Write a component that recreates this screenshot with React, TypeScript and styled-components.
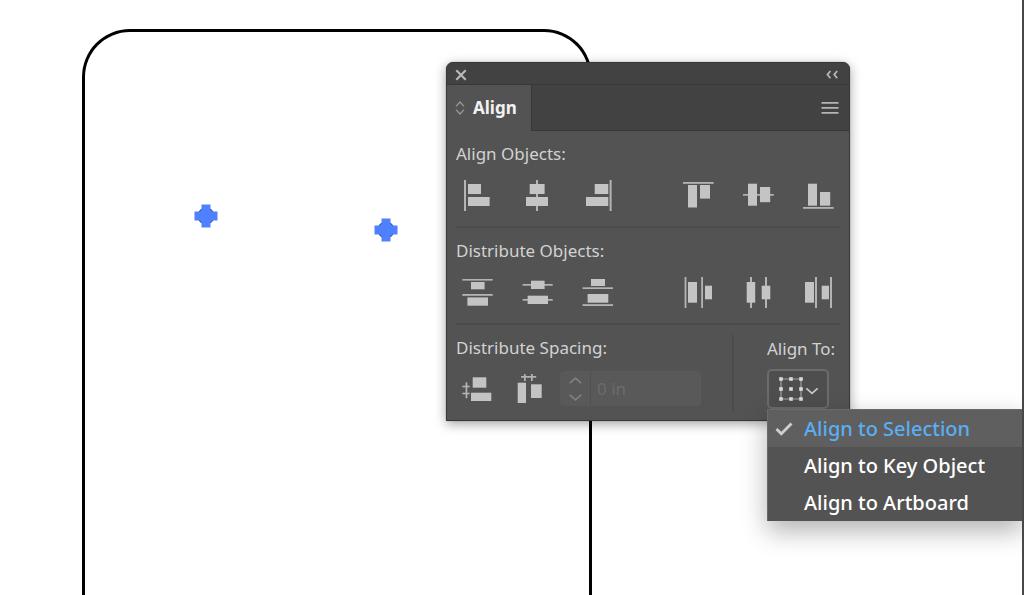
import React from "react";
import styled, { createGlobalStyle } from "styled-components";

const GlobalStyle = createGlobalStyle`
  * { box-sizing: border-box; }
  body { margin: 0; background: #fff; }
  button, input { font: inherit; color: inherit; }
`;

const Canvas = styled.main`
  position: relative;
  min-height: 100vh;
  overflow: hidden;
  background: #fff;
  border-right: 2px solid #48484a;
  font-family: "Noto Sans", "Open Sans", sans-serif;
  font-size: 17px;
  line-height: 24px;
  color: #d2d2d2;
`;

const Artboard = styled.div`
  position: absolute;
  left: 82px;
  top: 29px;
  bottom: 0;
  width: 510px;
  border: 3px solid #000;
  border-bottom: 0;
  border-radius: 48px 48px 0 0;
`;

const Anchor = styled.svg<{ $x: number; $y: number }>`
  position: absolute;
  left: ${(p) => p.$x}px;
  top: ${(p) => p.$y}px;
  width: 24px;
  height: 24px;
`;

const Panel = styled.section`
  position: absolute;
  left: 446px;
  top: 62px;
  width: 404px;
  background: #535353;
  border: 1px solid #383838;
  border-radius: 7px 7px 0 0;
  box-shadow: 0 3px 12px rgba(0, 0, 0, 0.36), 0 0 1px rgba(0, 0, 0, 0.6);
`;

const TitleBar = styled.header`
  display: flex;
  align-items: center;
  justify-content: space-between;
  height: 22px;
  padding: 2px 11px 0 8px;
  background: #424242;
  border-bottom: 1px solid #383838;
  border-radius: 6px 6px 0 0;
`;

const IconButton = styled.button`
  display: flex;
  padding: 0;
  border: 0;
  background: none;
  color: #b8b8b8;
`;

const TabBar = styled.div`
  display: flex;
  align-items: stretch;
  justify-content: space-between;
  height: 46px;
  padding-right: 10px;
  background: #424242;
  box-shadow: inset 0 -1px #383838;
`;

const Tab = styled.button`
  display: flex;
  align-items: center;
  gap: 8px;
  width: 85px;
  padding: 0 0 0 8px;
  border: 0;
  border-right: 1px solid #383838;
  background: #535353;
  color: #f2f2f2;
  font-weight: 700;
`;

const Body = styled.div`
  padding: 0 9px;
`;

const Group = styled.div`
  height: 97px;
  padding-top: 11px;
  border-bottom: 2px solid #4c4c4c;
`;

const Label = styled.h2`
  margin: 0;
  font-size: 17px;
  line-height: 24px;
  font-weight: 400;
`;

const Tools = styled.div`
  display: flex;
  align-items: center;
  justify-content: space-between;
  margin-top: 14px;
  padding: 0 6px 0 5px;
`;

const ToolSet = styled.div<{ $gap: number }>`
  display: flex;
  gap: ${(p) => p.$gap}px;
`;

const Tool = styled(IconButton)`
  color: #c4c4c4;
`;

const Footer = styled.div`
  display: flex;
  justify-content: space-between;
  height: 95px;
`;

const Spacing = styled.div`
  flex: 1;
  padding-top: 11px;
`;

const SpacingTools = styled.div`
  display: flex;
  align-items: center;
  margin-top: 11px;
  padding-left: 5px;
`;

const Field = styled.div`
  display: flex;
  width: 141px;
  height: 35px;
  margin-left: 15px;
  background: #595959;
  border-radius: 4px;
`;

const Stepper = styled.div`
  display: flex;
  flex-direction: column;
  align-items: center;
  justify-content: center;
  gap: 10px;
  width: 31px;
  border-right: 1px solid #505050;
`;

const Step = styled(IconButton)`
  color: #808080;
`;

const Amount = styled.input`
  flex: 1;
  min-width: 0;
  padding: 0 6px;
  border: 0;
  background: none;
  color: #6c6c6c;
`;

const Rule = styled.div`
  width: 2px;
  height: 78px;
  margin: 9px 33px 0 0;
  background: #4c4c4c;
`;

const AlignTo = styled.div`
  position: relative;
  width: 73px;
  height: 84px;
  padding-top: 12px;
  white-space: nowrap;
`;

const Picker = styled.button`
  display: flex;
  align-items: center;
  justify-content: center;
  gap: 2px;
  width: 62px;
  height: 40px;
  margin-top: 8px;
  padding: 0;
  border: 2px solid #6b6b6b;
  border-radius: 5px;
  background: #4e4e4e;
`;

const Menu = styled.ul`
  position: absolute;
  left: 0;
  top: 100%;
  width: 256px;
  margin: 0;
  padding: 0;
  list-style: none;
  border: 1px solid #6a6a6a;
  border-bottom: 0;
  background: #535353;
  box-shadow: 0 10px 24px rgba(0, 0, 0, 0.3);
`;

const Option = styled.button<{ $on?: boolean }>`
  display: flex;
  align-items: center;
  gap: 10px;
  width: 100%;
  height: 37px;
  padding: 1px 0 0 7px;
  border: 0;
  background: ${(p) => (p.$on ? "#5f5f5f" : "#535353")};
  color: ${(p) => (p.$on ? "#5aaef2" : "#fff")};
  font-size: 20px;
  font-weight: 500;
  line-height: 28px;
`;

const Mark = styled.span`
  display: flex;
  width: 19px;
  color: #cfcfcf;
`;

type Box = [number, number, number, number];

/* Bars are given as left, top, right, bottom in a 32-pixel square. */
const Glyph = ({ boxes, lines }: { boxes: Box[]; lines: Box[] }) => (
  <svg width="32" height="32" viewBox="0 0 32 32" fill="currentColor" aria-hidden="true">
    {lines.map(([l, t, r, b], i) => (
      <rect key={"l" + i} x={l} y={t} width={r - l} height={b - t} fill="#b4b4b4" />
    ))}
    {boxes.map(([l, t, r, b], i) => (
      <rect key={"b" + i} x={l} y={t} width={r - l} height={b - t} />
    ))}
  </svg>
);

type ToolSpec = { name: string; boxes: Box[]; lines: Box[] };

const alignX: ToolSpec[] = [
  { name: "Horizontal align left", lines: [[3, 0, 5, 31]], boxes: [[7, 4, 20, 14], [7, 17, 28.6, 26]] },
  { name: "Horizontal align center", lines: [[15, 0, 17, 31]], boxes: [[8.7, 4, 23.6, 14], [5, 17, 27, 26]] },
  { name: "Horizontal align right", lines: [[28.6, 0, 30.6, 31]], boxes: [[13.7, 4, 27.3, 14], [5, 17, 27.3, 26]] },
];
const alignY: ToolSpec[] = [
  { name: "Vertical align top", lines: [[1, 2, 31.7, 3.8]], boxes: [[6, 5, 15, 27.5], [18, 5, 28, 18.6]] },
  { name: "Vertical align center", lines: [[1, 14, 31.7, 15.7]], boxes: [[6, 3.7, 15, 25.7], [18, 7, 28.2, 22.2]] },
  { name: "Vertical align bottom", lines: [[1, 27, 31.7, 28.8]], boxes: [[6, 3.7, 15, 25.7], [18, 12, 28.2, 25.7]] },
];
const distY: ToolSpec[] = [
  { name: "Distribute top", lines: [[1.3, 2, 31.7, 3.6], [1.3, 17, 31.7, 18.8]], boxes: [[10, 5, 23.6, 12.3], [6.4, 20.4, 27, 28.7]] },
  { name: "Distribute vertical center", lines: [[1.6, 7, 31.7, 8.7], [1.6, 22, 31.7, 23.7]], boxes: [[10, 3.7, 23.6, 12], [6.6, 18.7, 27, 27]] },
  { name: "Distribute bottom", lines: [[1.6, 10.3, 32, 12], [1.6, 27.2, 32, 29]], boxes: [[10, 2, 24, 9], [6.6, 17, 27.3, 25.7]] },
];
const distX: ToolSpec[] = [
  { name: "Distribute left", lines: [[2.6, 0, 4.4, 31], [19.2, 0, 21, 31]], boxes: [[6, 5, 15, 25.7], [23, 8.7, 30, 22.3]] },
  { name: "Distribute horizontal center", lines: [[8, 0, 10, 31], [23, 0, 25, 31]], boxes: [[4.7, 5, 13.2, 25.7], [19.7, 8.7, 28.3, 22.3]] },
  { name: "Distribute right", lines: [[13, 0, 15, 31], [28, 0, 30, 31]], boxes: [[3, 5, 12, 25.7], [19.7, 8.7, 27, 22.3]] },
];
const spacing: ToolSpec[] = [
  {
    name: "Vertical distribute space",
    lines: [[4.6, 9.3, 6.3, 25.2], [1.3, 12.7, 8.7, 14.3], [1.3, 19.7, 8.7, 21.3]],
    boxes: [[11.7, 4.3, 25.3, 14.7], [10, 19.7, 30.3, 28]],
  },
  {
    name: "Horizontal distribute space",
    lines: [[8, 3, 23.2, 4.7], [11, 1, 12.7, 8], [18, 1, 19.7, 8]],
    boxes: [[4.7, 9.7, 13, 30], [18, 11.3, 28.7, 25]],
  },
];

const ToolGroup = ({ tools, gap = 28 }: { tools: ToolSpec[]; gap?: number }) => (
  <ToolSet $gap={gap}>
    {tools.map((t) => (
      <Tool key={t.name} type="button" aria-label={t.name}>
        <Glyph boxes={t.boxes} lines={t.lines} />
      </Tool>
    ))}
  </ToolSet>
);

const AnchorPoint = ({ x, y }: { x: number; y: number }) => (
  <Anchor $x={x} $y={y} viewBox="0 0 24 24" aria-hidden="true">
    <circle cx="12" cy="12" r="8.5" fill="#1c2438" />
    <path
      d="M7.5 0.5h9v5l2 2h5v9h-5l-2 2v5h-9v-5l-2-2h-5v-9h5l2-2z"
      fill="#4f80ff"
    />
  </Anchor>
);

const Chevron = ({ up }: { up?: boolean }) => (
  <svg width="13" height="7" viewBox="0 0 13 7" fill="none" stroke="currentColor" strokeWidth="1.7" aria-hidden="true">
    <path d={up ? "M0.8 6.2l5.7-5 5.7 5" : "M0.8 0.8l5.7 5 5.7-5"} />
  </svg>
);

const PickerIcon = () => (
  <svg width="41" height="28" viewBox="0 0 41 28" aria-hidden="true">
    <path d="M3 4h20v20H3z" fill="none" stroke="#a0a0a0" strokeWidth="1.2" />
    {[3, 13, 23].map((x) =>
      [4, 14, 24].map((y) => (
        <rect key={x + "-" + y} x={x - 1.8} y={y - 1.8} width="3.6" height="3.6" fill="#dcdcdc" />
      ))
    )}
    <path d="M28.4 13.4l5.6 5 5.6-5" fill="none" stroke="#c8c8c8" strokeWidth="1.7" />
  </svg>
);

export default function App() {
  return (
    <>
      <GlobalStyle />
      <Canvas>
        <Artboard />
        <AnchorPoint x={194} y={204} />
        <AnchorPoint x={374} y={218} />
        <Panel aria-label="Align">
          <TitleBar>
            <IconButton type="button" aria-label="Close">
              <svg width="12" height="12" viewBox="0 0 12 12" stroke="currentColor" strokeWidth="2.2" aria-hidden="true">
                <path d="M1.3 1.3l9.4 9.4M10.7 1.3L1.3 10.7" />
              </svg>
            </IconButton>
            <IconButton type="button" aria-label="Collapse">
              <svg width="12" height="10" viewBox="0 0 12 10" fill="none" stroke="currentColor" strokeWidth="1.7" aria-hidden="true">
                <path d="M4.4 1L1.4 4.6l3 3.6M11.2 1l-3 3.6 3 3.6" />
              </svg>
            </IconButton>
          </TitleBar>
          <TabBar>
            <Tab type="button">
              <svg width="10" height="14" viewBox="0 0 10 14" fill="none" stroke="#9a9a9a" strokeWidth="1.2" aria-hidden="true">
                <path d="M1 5.4L5 1l4 4.4M1 8.6L5 13l4-4.4" />
              </svg>
              Align
            </Tab>
            <IconButton type="button" aria-label="Panel menu">
              <svg width="18" height="46" viewBox="0 0 18 46" fill="#b4b4b4" aria-hidden="true">
                <path d="M0.5 17h17v1.8h-17zM0.5 22h17v1.8h-17zM0.5 27h17v1.8h-17z" />
              </svg>
            </IconButton>
          </TabBar>
          <Body>
            <Group>
              <Label>Align Objects:</Label>
              <Tools>
                <ToolGroup tools={alignX} />
                <ToolGroup tools={alignY} />
              </Tools>
            </Group>
            <Group>
              <Label>Distribute Objects:</Label>
              <Tools>
                <ToolGroup tools={distY} />
                <ToolGroup tools={distX} />
              </Tools>
            </Group>
            <Footer>
              <Spacing>
                <Label>Distribute Spacing:</Label>
                <SpacingTools>
                  <ToolGroup tools={spacing} gap={20} />
                  <Field>
                    <Stepper>
                      <Step type="button" aria-label="Increase spacing" disabled>
                        <Chevron up />
                      </Step>
                      <Step type="button" aria-label="Decrease spacing" disabled>
                        <Chevron />
                      </Step>
                    </Stepper>
                    <Amount aria-label="Spacing" defaultValue="0 in" disabled />
                  </Field>
                </SpacingTools>
              </Spacing>
              <Rule />
              <AlignTo>
                <Label>Align To:</Label>
                <Picker type="button" aria-label="Align to" aria-haspopup="menu" aria-expanded="true">
                  <PickerIcon />
                </Picker>
                <Menu>
                  {["Align to Selection", "Align to Key Object", "Align to Artboard"].map((text, i) => (
                    <li key={text}>
                      <Option type="button" $on={i === 0}>
                        <Mark>
                          {i === 0 && (
                            <svg width="18" height="14" viewBox="0 0 18 14" fill="none" stroke="currentColor" strokeWidth="2.8" aria-hidden="true">
                              <path d="M1.5 7l4.8 4.8L16.5 1.5" />
                            </svg>
                          )}
                        </Mark>
                        {text}
                      </Option>
                    </li>
                  ))}
                </Menu>
              </AlignTo>
            </Footer>
          </Body>
        </Panel>
      </Canvas>
    </>
  );
}
